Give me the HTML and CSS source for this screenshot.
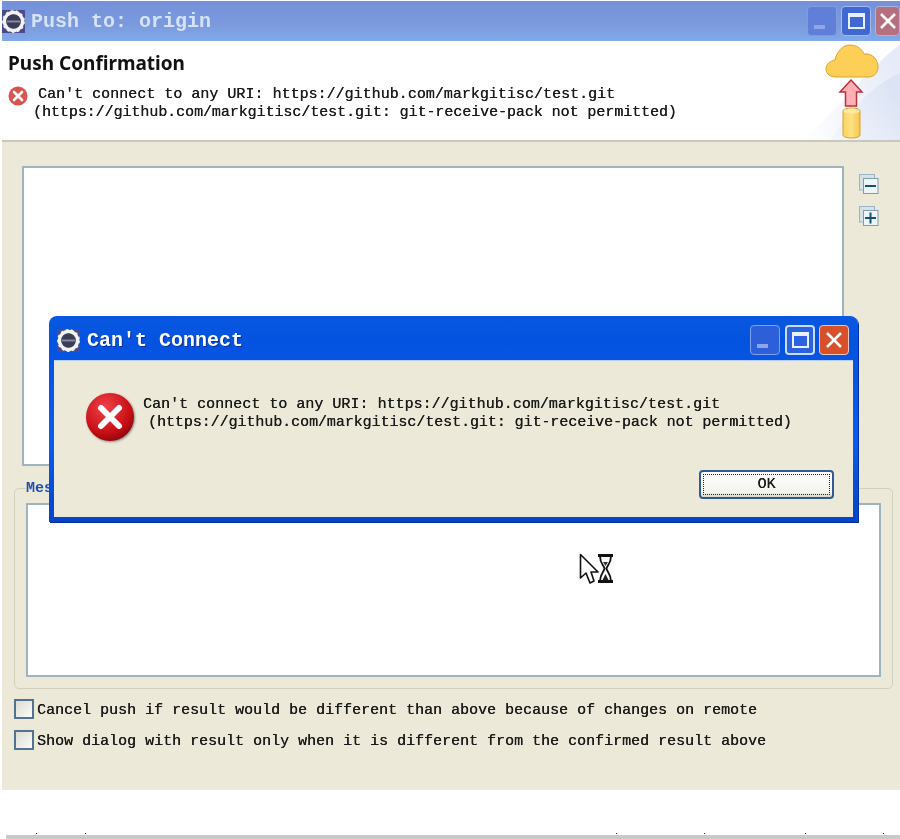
FILE: index.html
```html
<!DOCTYPE html>
<html lang="en">
<head>
<meta charset="utf-8">
<title>Push to: origin</title>
<link rel="stylesheet" href="styles.css">
</head>
<body>
<svg class="defs" width="0" height="0" aria-hidden="true">
  <symbol id="gear" viewBox="0 0 24 24">
    <rect x="0" y="0" width="24" height="24" fill="#4a4a8c"/>
    <circle cx="12" cy="12" r="9.4" fill="none" stroke="#f2f2ee" stroke-width="3.6"/>
    <circle cx="12" cy="12" r="10.6" fill="none" stroke="#f2f2ee" stroke-width="2.6" stroke-dasharray="2.6 2.6"/>
    <circle cx="12" cy="12" r="7.4" fill="#3c3c58"/>
    <rect x="5" y="11" width="14" height="2" fill="#8a8aa0"/>
  </symbol>
  <symbol id="collapse" viewBox="0 0 20 22">
    <rect x="0.500" y="0.500" width="15" height="15.500" fill="#d5e2e8" stroke="#9db4c0"/>
    <rect x="4.500" y="4.500" width="14.500" height="15" fill="#eef5f7" stroke="#7f9dab"/>
    <rect x="6" y="11" width="11" height="2" fill="#17506e"/>
  </symbol>
  <symbol id="expand" viewBox="0 0 20 22">
    <rect x="0.500" y="0.500" width="15" height="15.500" fill="#d5e2e8" stroke="#9db4c0"/>
    <rect x="4.500" y="4.500" width="14.500" height="15" fill="#eef5f7" stroke="#7f9dab"/>
    <rect x="6" y="11" width="11" height="2" fill="#17506e"/>
    <rect x="10.500" y="6.500" width="2" height="11" fill="#17506e"/>
  </symbol>
</svg>

<div class="stage">
  <div class="window">
    <div class="titlebar">
      <svg class="gear"><use href="#gear"/></svg>
      <span class="title">Push to: origin</span>
      <div class="controls">
        <span class="ctl ctl-min"><i class="min-glyph"></i></span>
        <span class="ctl ctl-max"><i class="max-glyph"></i></span>
        <span class="ctl ctl-close">
          <svg viewBox="0 0 20 20" class="x-glyph"><path d="M3 3 17 17M17 3 3 17"/></svg>
        </span>
      </div>
    </div>

    <header class="banner">
      <div class="banner-text">
        <h1>Push Confirmation</h1>
        <div class="msg">
          <svg class="msg-icon" viewBox="0 0 20 20">
            <circle cx="10" cy="10" r="9.500" fill="#d9534f"/>
            <path d="M6 6 14 14M14 6 6 14" stroke="#fff" stroke-width="2.600" stroke-linecap="round"/>
          </svg>
          <p class="mono">
            <span class="l1">Can't connect to any URI: https://github.com/markgitisc/test.git</span>
            <span class="l2">(https://github.com/markgitisc/test.git: git-receive-pack not permitted)</span>
          </p>
        </div>
      </div>
      <svg class="banner-art" viewBox="0 0 100 99">
        <defs>
          <linearGradient id="sky" x1="0" y1="1" x2="1" y2="0.300">
            <stop offset="0" stop-color="#ffffff"/>
            <stop offset="1" stop-color="#e6ebf7"/>
          </linearGradient>
          <linearGradient id="sky2" x1="0" y1="1" x2="1" y2="0.300">
            <stop offset="0" stop-color="#f4f6fb"/>
            <stop offset="1" stop-color="#dbe3f4"/>
          </linearGradient>
          <linearGradient id="can" x1="0" y1="0" x2="1" y2="0">
            <stop offset="0" stop-color="#fbd35e"/>
            <stop offset="0.500" stop-color="#ffe083"/>
            <stop offset="1" stop-color="#f6c649"/>
          </linearGradient>
        </defs>
        <path d="M0 99C30 80 60 35 100 3V99Z" fill="url(#sky)"/>
        <path d="M30 99C50 70 70 45 100 32V99Z" fill="url(#sky2)"/>
        <path d="M36 36C28 36 26 31 26 28 26 23 30 20 35 19 37 10 43 4 50 4 57 4 62 8 64 13 72 12 78 18 78 26 78 32 74 36 68 36Z" fill="#fdcf57" stroke="#d9a52c" stroke-width="1"/>
        <path d="M51 39 62 51H56.500V65H45.500V51H40Z" fill="#ffb0b4" stroke="#b8303a" stroke-width="1.500"/>
        <path d="M43 70C43 66 60 66 60 70V94C60 98 43 98 43 94Z" fill="url(#can)" stroke="#d4a132" stroke-width="1"/>
        <ellipse cx="51.500" cy="70" rx="8" ry="2.500" fill="#ffe9a6"/>
      </svg>
    </header>

    <main class="content">
      <div class="tree-row">
        <div class="tree"></div>
        <div class="tree-tools">
          <svg class="tool"><use href="#collapse"/></svg>
          <svg class="tool"><use href="#expand"/></svg>
        </div>
      </div>

      <fieldset class="group">
        <legend class="mono legend">Messages</legend>
        <div class="messages"></div>
      </fieldset>

      <label class="check mono"><span class="box"></span><span class="check-text">Cancel push if result would be different than above because of changes on remote</span></label>
      <label class="check check-2 mono"><span class="box"></span><span class="check-text">Show dialog with result only when it is different from the confirmed result above</span></label>
    </main>
  </div>

  <div class="footer-rule">
    <i></i><i></i><i></i><i></i><i></i><i></i>
  </div>

  <section class="dialog">
    <div class="dlg-title">
      <svg class="gear"><use href="#gear"/></svg>
      <span class="title title-active">Can't Connect</span>
      <div class="controls dlg-controls">
        <span class="ctl dctl-min"><i class="min-glyph"></i></span>
        <span class="ctl dctl-max"><i class="max-glyph"></i></span>
        <span class="ctl dctl-close">
          <svg viewBox="0 0 20 20" class="x-glyph"><path d="M3 3 17 17M17 3 3 17"/></svg>
        </span>
      </div>
    </div>
    <div class="dlg-body">
      <div class="dlg-msg">
        <svg class="err" viewBox="0 0 50 50">
          <defs>
            <radialGradient id="red" cx="0.400" cy="0.300" r="0.800">
              <stop offset="0" stop-color="#f0434a"/>
              <stop offset="0.650" stop-color="#c90f16"/>
              <stop offset="1" stop-color="#7c0306"/>
            </radialGradient>
          </defs>
          <circle cx="25" cy="25" r="24" fill="url(#red)"/>
          <path d="M16 16 34 34M34 16 16 34" stroke="#fff" stroke-width="6" stroke-linecap="round"/>
        </svg>
        <p class="mono dlg-text">
          <span class="d1">Can't connect to any URI: https://github.com/markgitisc/test.git</span>
          <span class="d2">(https://github.com/markgitisc/test.git: git-receive-pack not permitted)</span>
        </p>
      </div>
      <div class="dlg-actions">
        <button class="ok mono" type="button"><span>OK</span></button>
      </div>
    </div>
  </section>

  <svg class="cursor" viewBox="0 0 36 32">
    <path d="M1.500 1.500V25L7 20 11 30 15 28 12 19H19Z" fill="#fff" stroke="#111" stroke-width="1.600" stroke-linejoin="round"/>
    <path d="M19 2.500H34M19 28.500H34" fill="none" stroke="#111" stroke-width="3"/>
    <path d="M21 3C21 11 25 12 25.500 15.500 25 19 21 21 21 28M32 3C32 11 28 12 27.500 15.500 28 19 32 21 32 28" fill="#fff" stroke="#111" stroke-width="1.800"/>
    <path d="M23.500 27 26.500 21 29.500 27Z" fill="#222"/>
    <path d="M24 9H29L26.500 13Z" fill="#333"/>
  </svg>
</div>
</body>
</html>
```
FILE: styles.css
```css
* { box-sizing: border-box; }
html, body { margin: 0; padding: 0; background: #fff; }
body { width: 900px; height: 839px; overflow: hidden; }
.defs { position: absolute; }
.stage { position: relative; width: 900px; height: 839px; padding: 1px 0 0 2px; filter: blur(0.35px); }
.mono { font-family: "Liberation Mono", monospace; font-size: 15px; color: #1a1a1a; font-weight: 400; text-shadow: 0.2px 0 0 #1a1a1a; }

.window { width: 898px; height: 789px; display: flex; flex-direction: column; }
.titlebar { height: 40px; flex: none; display: flex; align-items: center; background: linear-gradient(#7491d9, #7b9ade 60%, #81a9e8); }
.gear { width: 23px; height: 23px; flex: none; }
.title { font-family: "Liberation Mono", monospace; font-weight: 700; font-size: 20px; color: #d6e2f6; margin-left: 6px; }
.title-active { color: #fff; text-shadow: 1px 1px 0 #0a2f9c; margin-left: 7px; }
.controls { margin-left: auto; display: flex; gap: 4px; }
.ctl { width: 30px; height: 30px; border-radius: 4px; display: flex; align-items: center; justify-content: center; position: relative; }
.ctl-min { background: #5f7fd8; border: 1px solid #7f9be2; }
.ctl-max { background: #3f68d2; border: 1px solid #a4bdee; }
.ctl-close { background: #b4707f; border: 1px solid #a8b5e0; width: 25px; }
.min-glyph { display: block; width: 11px; height: 4px; background: #8ea6e8; position: absolute; left: 6px; bottom: 6px; }
.max-glyph { display: block; width: 17px; height: 16px; border: 2px solid #e8f0ff; border-top-width: 4px; }
.x-glyph { width: 20px; height: 20px; }
.x-glyph path { stroke: #fff; stroke-width: 2.600; fill: none; }

.banner { height: 99px; flex: none; background: #fff; display: flex; justify-content: space-between; }
.banner-text { padding: 10px 0 0 6px; }
h1 { margin: 0; font-family: "Noto Sans", sans-serif; font-weight: 700; font-size: 19px; line-height: 24px; color: #111; }
.msg { display: flex; margin-top: 11px; }
.msg-icon { width: 20px; height: 20px; flex: none; margin-top: 0; }
.msg p { margin: 0; line-height: 18px; }
.msg p span { display: block; white-space: pre; }
.l1 { margin-left: 10px; letter-spacing: 0.015px; }
.l2 { margin-left: 5px; letter-spacing: -0.06px; }
.banner-art { width: 100px; height: 99px; flex: none; }

.content { flex: 1; background: #ece9d8; border-top: 2px solid #c9c8bd; padding: 24px 7px 0 12px; }
.tree-row { display: flex; height: 300px; margin-left: 8px; }
.tree { width: 822px; height: 300px; background: #fff; border: 2px solid #9fb3bf; }
.tree-tools { display: flex; flex-direction: column; gap: 10px; margin-left: 15px; padding-top: 8px; }
.tool { width: 20px; height: 22px; }
.group { margin: 16px 0 0; width: 879px; height: 207px; border: 1px solid #d3d0bd; border-radius: 5px; padding: 8px 11px 10px; display: block; }
.legend { color: #1e4fb0; padding: 0; margin-left: 0; line-height: 13px; font-weight: 700; text-shadow: none; }
.messages { height: 174px; background: #fff; border: 2px solid #9fb3bf; }
.check { display: flex; align-items: center; height: 20px; margin-top: 10px; white-space: pre; }
.check-2 { margin-top: 11px; }
.check-text { padding-top: 2px; }
.box { width: 20px; height: 20px; flex: none; margin-right: 3px; border: 2px solid #4f7391; background: linear-gradient(135deg, #dcdcd4, #fbfbf8); }

.footer-rule { height: 4px; margin: 45px 0 0 4px; background: #c9c9c9; position: relative; }
.footer-rule i { position: absolute; top: -2px; width: 1px; height: 1px; background: #222; }
.footer-rule i:nth-child(1) { left: 30px; }
.footer-rule i:nth-child(2) { left: 79px; }
.footer-rule i:nth-child(3) { left: 610px; }
.footer-rule i:nth-child(4) { left: 698px; }
.footer-rule i:nth-child(5) { left: 799px; }
.footer-rule i:nth-child(6) { left: 877px; }

.dialog { position: absolute; left: 49px; top: 316px; width: 809px; height: 206px; border-radius: 8px 8px 0 0; background: linear-gradient(#0a58e0, #0453e0 12%, #0a5cf0 60%, #0444c8); box-shadow: 1px 1px 0 #03309a; display: flex; flex-direction: column; }
.dlg-title { height: 44px; flex: none; display: flex; align-items: center; padding: 4px 9px 0 8px; }
.dlg-controls { gap: 4px; }
.dctl-min { background: #2c5fd8; border: 1px solid #7fa3ee; margin-right: 1px; }
.dctl-max { background: #2c62e0; border: 2px solid #c9dcfa; }
.dctl-close { background: #d8502a; border: 1px solid #e8c8c0; }
.dlg-body { flex: 1; margin: 0 5px 5px; background: #ece9d8; border-top: 1px solid #b6cdf0; display: flex; flex-direction: column; }
.dlg-msg { display: flex; padding: 31px 0 0 31px; }
.err { width: 50px; height: 50px; flex: none; filter: drop-shadow(1px 1px 1px #888); }
.dlg-text { margin: 0 0 0 8px; line-height: 18px; position: relative; top: 4px; }
.dlg-text span { display: block; white-space: pre; }
.d1 { letter-spacing: 0.015px; }
.d2 { margin-left: 5px; letter-spacing: -0.06px; }
.dlg-actions { display: flex; justify-content: flex-end; padding: 28px 19px 0 0; }
.ok { width: 135px; height: 29px; padding: 2px; background: linear-gradient(#fff, #f4f4ee 80%, #dcd8c8); border: 2px solid #2f5a96; border-radius: 4px; }
.ok span { display: block; height: 100%; border: 1px dotted #222; line-height: 19px; }

.cursor { position: absolute; left: 579px; top: 553px; width: 36px; height: 32px; }
```
